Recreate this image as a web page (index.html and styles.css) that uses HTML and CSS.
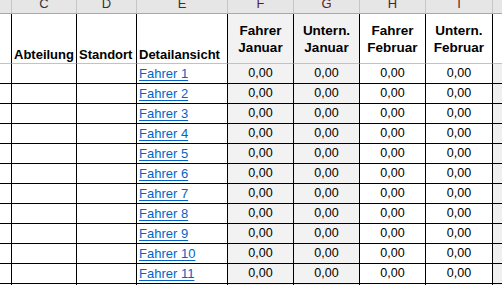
FILE: index.html
```html
<!DOCTYPE html>
<html lang="de">
<head>
<meta charset="utf-8">
<title>Tabelle</title>
<link rel="stylesheet" href="styles.css">
</head>
<body>
<div class="sheet">
  <div class="col-hd hd-b"></div>
  <div class="col-hd">C</div>
  <div class="col-hd">D</div>
  <div class="col-hd">E</div>
  <div class="col-hd sel">F</div>
  <div class="col-hd sel">G</div>
  <div class="col-hd sel">H</div>
  <div class="col-hd sel">I</div>
  <div class="col-hd hd-j"></div>

  <div class="th b"></div>
  <div class="th low">Abteilung</div>
  <div class="th low">Standort</div>
  <div class="th low">Detailansicht</div>
  <div class="th mid shade">Fahrer<br>Januar</div>
  <div class="th mid shade">Untern.<br>Januar</div>
  <div class="th mid">Fahrer<br>Februar</div>
  <div class="th mid">Untern.<br>Februar</div>
  <div class="th j"></div>
</div>
<div class="sheet rows" id="rows"></div>
<script src="app.js"></script>
</body>
</html>
```

FILE: app.js
```js
const rows = document.getElementById('rows');
for (let i = 1; i <= 11; i++) {
  const cells = [
    '<div class="td b"></div>',
    '<div class="td"></div>',
    '<div class="td"></div>',
    '<div class="td link"><a href="#">Fahrer ' + i + '</a></div>',
    '<div class="td num shade">0,00</div>',
    '<div class="td num shade">0,00</div>',
    '<div class="td num">0,00</div>',
    '<div class="td num">0,00</div>',
    '<div class="td j"></div>'
  ];
  rows.insertAdjacentHTML('beforeend', cells.join(''));
}
rows.insertAdjacentHTML('beforeend',
  '<div class="td b"></div><div class="td"></div><div class="td"></div><div class="td"></div>' +
  '<div class="td shade"></div><div class="td shade"></div><div class="td"></div><div class="td"></div><div class="td j"></div>');
```

FILE: styles.css
```css
html, body {
  margin: 0;
  padding: 0;
  background: #ffffff;
  overflow: hidden;
}
body {
  width: 502px;
  height: 285px;
  font-family: "Liberation Sans", Arial, sans-serif;
  color: #000;
}
.sheet {
  display: grid;
  grid-template-columns: 12px 65px 60px 91px 66px 66px 66px 67px 1fr;
}
.col-hd {
  height: 13px;
  background: #e6e6e6;
  border-right: 1px solid #c6c6c6;
  border-bottom: 1px solid #a8a8a8;
  font-size: 13px;
  line-height: 7px;
  text-align: center;
  color: #333;
  overflow: hidden;
}
.col-hd.sel { color: #5a1c2c; }
.col-hd.hd-j { border-right: 0; }
.th {
  height: 49px;
  border-right: 1px solid #000;
  border-bottom: 1px solid #c2c2c2;
  font-weight: bold;
  font-size: 13.5px;
  display: flex;
  flex-direction: column;
  white-space: nowrap;
  overflow: hidden;
}
.th.low {
  justify-content: flex-end;
  line-height: 16px;
  padding-left: 2px;
  font-size: 13px;
}
.th.mid {
  justify-content: center;
  align-items: center;
  text-align: center;
  line-height: 17px;
  padding-top: 1px;
  height: 48px;
}
.th.j { border-right: 0; }
.shade { background: #f2f2f2; }
.td {
  height: 19px;
  border-right: 1px solid #000;
  border-bottom: 1px solid #000;
  line-height: 19px;
  font-size: 12.5px;
  white-space: nowrap;
  overflow: hidden;
}
.td.j { border-right: 0; background: #f0f0f0; }
.td.num { text-align: center; }
.td.link { padding-left: 2px; font-size: 13px; }
.td.link a {
  color: #0563c1;
  text-decoration: underline;
  text-underline-offset: 2px;
}
```
